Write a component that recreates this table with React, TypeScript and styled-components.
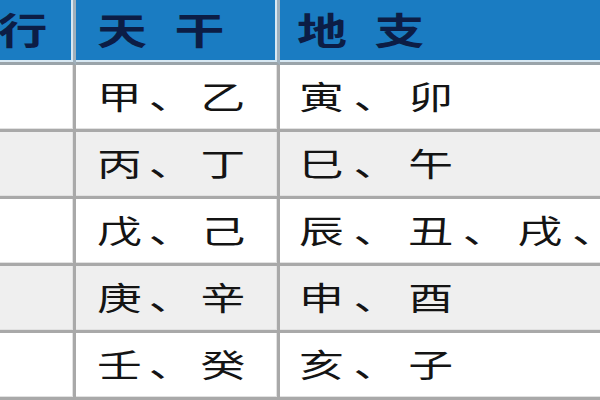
import React from 'react';
import styled, { createGlobalStyle } from 'styled-components';

const GlobalStyle = createGlobalStyle`
    html, body {
        margin: 0;
        padding: 0;
        background: #ffffff;
        overflow: hidden;
    }
`;

const rows = [
    { wuxing: '木', gan: '甲、乙', zhi: '寅、卯' },
    { wuxing: '火', gan: '丙、丁', zhi: '巳、午' },
    { wuxing: '土', gan: '戊、己', zhi: '辰、丑、戌、未' },
    { wuxing: '金', gan: '庚、辛', zhi: '申、酉' },
    { wuxing: '水', gan: '壬、癸', zhi: '亥、子' },
];

const App: React.FC = () => {
    return (
        <>
            <GlobalStyle />
            <Table>
                <HeadCell $first>
                    <HeadText $right>五 行</HeadText>
                </HeadCell>
                <HeadCell>
                    <HeadText>天 干</HeadText>
                </HeadCell>
                <HeadCell $last>
                    <HeadText>地 支</HeadText>
                </HeadCell>
                {rows.map((row, i) => (
                    <React.Fragment key={row.gan}>
                        <BodyCell $shade={i % 2 === 1} $first />
                        <BodyCell $shade={i % 2 === 1}>
                            <BodyText>{row.gan}</BodyText>
                        </BodyCell>
                        <BodyCell $shade={i % 2 === 1} $last>
                            <BodyText $wide>{row.zhi}</BodyText>
                        </BodyCell>
                    </React.Fragment>
                ))}
            </Table>
        </>
    );
};

const Table = styled.div`
    display: grid;
    grid-template-columns: 76px 204px 1fr;
    grid-template-rows: 65px repeat(5, 67px);
    width: 600px;
    height: 400px;
    overflow: hidden;
    font-family: 'Noto Sans CJK SC', 'Noto Sans CJK TC', sans-serif;
`;

const HeadCell = styled.div<{ $first?: boolean; $last?: boolean }>`
    display: flex;
    align-items: center;
    justify-content: ${(p) => (p.$first ? 'flex-end' : 'flex-start')};
    padding-left: ${(p) => (p.$first ? '0' : p.$last ? '17px' : '21px')};
    padding-right: ${(p) => (p.$first ? '26px' : '0')};
    background-color: #1a7cc2;
    border-right: ${(p) => (p.$last ? 'none' : '3px solid #9fb0bc')};
    border-bottom: 3px solid #9aa4aa;
    box-shadow: ${(p) => (p.$last ? 'inset 0 -2px 0 #d7e8f3' : 'inset -2px -2px 0 #d7e8f3')};
    overflow: hidden;
    white-space: nowrap;
`;

const HeadText = styled.span<{ $right?: boolean }>`
    display: inline-block;
    font-size: 37px;
    font-weight: 700;
    color: #0c1d45;
    letter-spacing: ${(p) => (p.$right ? '0' : '6px')};
    transform: scaleX(1.35);
    transform-origin: ${(p) => (p.$right ? 'right center' : 'left center')};
    margin-top: -5px;
`;

const BodyCell = styled.div<{ $shade?: boolean; $first?: boolean; $last?: boolean }>`
    display: flex;
    align-items: center;
    padding-left: ${(p) => (p.$last ? '19px' : '21px')};
    background-color: ${(p) => (p.$shade ? '#efefef' : '#ffffff')};
    border-right: ${(p) => (p.$last ? 'none' : '3px solid #a9a9a9')};
    border-bottom: 3px solid #a9a9a9;
    box-shadow: ${(p) => (p.$last ? 'inset 0 -1px 0 #e2e2e2' : 'inset -1px -1px 0 #e2e2e2')};
    overflow: hidden;
    white-space: nowrap;
`;

const BodyText = styled.span<{ $wide?: boolean }>`
    display: inline-block;
    font-size: 32px;
    font-weight: 400;
    color: #141414;
    letter-spacing: ${(p) => (p.$wide ? '7px' : '5px')};
    transform: scaleX(1.4);
    transform-origin: left center;
    margin-top: -4px;
`;

export default App;
